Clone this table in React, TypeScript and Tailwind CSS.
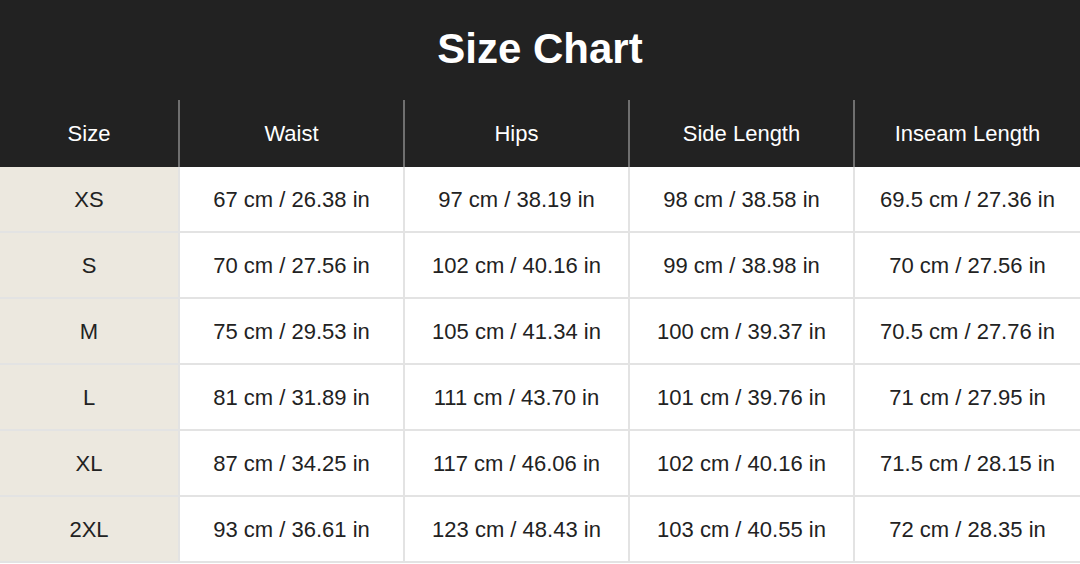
import React from "react";

const rows = [
  ["XS", "67 cm / 26.38 in", "97 cm / 38.19 in", "98 cm / 38.58 in", "69.5 cm / 27.36 in"],
  ["S", "70 cm / 27.56 in", "102 cm / 40.16 in", "99 cm / 38.98 in", "70 cm / 27.56 in"],
  ["M", "75 cm / 29.53 in", "105 cm / 41.34 in", "100 cm / 39.37 in", "70.5 cm / 27.76 in"],
  ["L", "81 cm / 31.89 in", "111 cm / 43.70 in", "101 cm / 39.76 in", "71 cm / 27.95 in"],
  ["XL", "87 cm / 34.25 in", "117 cm / 46.06 in", "102 cm / 40.16 in", "71.5 cm / 28.15 in"],
  ["2XL", "93 cm / 36.61 in", "123 cm / 48.43 in", "103 cm / 40.55 in", "72 cm / 28.35 in"],
];

const headers = ["Size", "Waist", "Hips", "Side Length", "Inseam Length"];

const App = () => {
  return (
    <div
      className="w-[1080px] h-[564px] bg-white text-[#222222] overflow-hidden"
      style={{ fontFamily: '"Liberation Sans", Arial, sans-serif' }}
    >
      <div className="bg-[#222222] text-white">
        <h1 className="h-[100px] flex items-center justify-center text-[42px] font-bold pb-1">
          Size Chart
        </h1>
        <div className="grid grid-cols-[180px_225px_225px_225px_225px] h-[67px]">
          {headers.map((h, i) => (
            <div
              key={h}
              className={
                i < headers.length - 1
                  ? "flex items-center justify-center text-[22px] border-r-2 border-[#6f6f6f]"
                  : "flex items-center justify-center text-[22px]"
              }
            >
              {h}
            </div>
          ))}
        </div>
      </div>
      <div className="grid grid-cols-[180px_225px_225px_225px_225px]">
        {rows.map((row) =>
          row.map((cell, i) => (
            <div
              key={row[0] + i}
              className={
                (i === 0 ? "bg-[#ece8df] " : "bg-white ") +
                (i < row.length - 1 ? "border-r-2 " : "") +
                "h-[66px] flex items-center justify-center text-[22px] border-b-2 border-[#e3e3e3]"
              }
            >
              {cell}
            </div>
          ))
        )}
      </div>
    </div>
  );
};

export default App;
